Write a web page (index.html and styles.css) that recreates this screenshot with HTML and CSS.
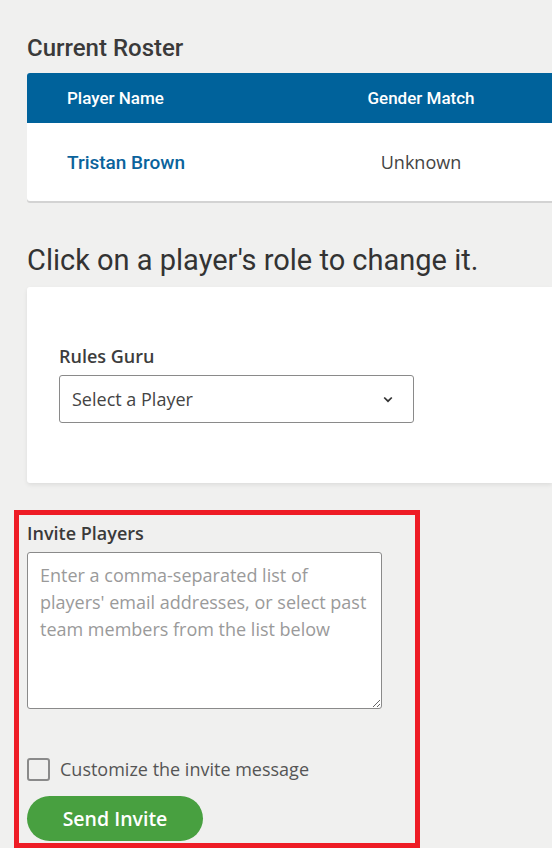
FILE: index.html
```html
<!DOCTYPE html>
<html>
<head>
<meta charset="utf-8">
<link rel="stylesheet" href="styles.css">
</head>
<body>
<div class="page">
  <h2 class="roster-title">Current Roster</h2>
  <div class="table">
    <div class="thead">
      <div class="col-name">Player Name</div>
      <div class="col-gender">Gender Match</div>
    </div>
    <div class="trow">
      <div class="col-name"><a class="player-link" href="#">Tristan Brown</a></div>
      <div class="col-gender gender-val">Unknown</div>
    </div>
  </div>

  <h2 class="roles-title">Click on a player's role to change it.</h2>
  <div class="card">
    <div class="field-label">Rules Guru</div>
    <div class="select">
      <span>Select a Player</span>
      <svg class="chev" width="10" height="7" viewBox="0 0 10 7"><path d="M1.2 1.5 L5 5.2 L8.8 1.5" fill="none" stroke="#333" stroke-width="1.7"/></svg>
    </div>
  </div>

  <div class="invite">
    <div class="invite-label">Invite Players</div>
    <textarea class="invite-text" placeholder="Enter a comma-separated list of players' email addresses, or select past team members from the list below"></textarea>
    <label class="check-row">
      <span class="checkbox"></span>
      <span class="check-label">Customize the invite message</span>
    </label>
    <button class="send-btn">Send Invite</button>
  </div>
</div>
</body>
</html>
```

FILE: styles.css
```css
html, body {
  margin: 0;
  padding: 0;
  background: #f0f0ef;
  overflow: hidden;
}
body {
  width: 552px;
  height: 848px;
  font-family: "Open Sans", "Liberation Sans", sans-serif;
  color: #333;
}
.page {
  padding: 34px 0 0 27px;
}
.roster-title {
  font-family: Roboto, "Liberation Sans", sans-serif;
  font-weight: 500;
  font-size: 24px;
  color: #3a3a3a;
  margin: 0;
  line-height: 28px;
}
.table {
  margin-top: 11px;
  width: 525px;
  background: #fff;
  border-radius: 3px 0 0 3px;
  box-shadow: 0 2px 0 #d3d3d3;
  overflow: hidden;
}
.thead {
  display: flex;
  height: 50px;
  align-items: center;
  background: #00629b;
  color: #fff;
  font-family: Roboto, "Liberation Sans", sans-serif;
  font-weight: 500;
  font-size: 17px;
}
.trow {
  display: flex;
  height: 78px;
  align-items: center;
}
.col-name {
  width: 245px;
  padding-left: 40px;
}
.col-gender {
  width: 218px;
  text-align: center;
}
.player-link {
  font-family: Roboto, "Liberation Sans", sans-serif;
  font-weight: 500;
  font-size: 19px;
  color: #0a639c;
  text-decoration: none;
}
.gender-val {
  font-size: 18px;
  color: #444;
}
.roles-title {
  font-family: Roboto, "Liberation Sans", sans-serif;
  font-weight: 400;
  font-size: 29px;
  color: #333;
  margin: 41px 0 0 0;
  line-height: 36px;
}
.card {
  margin-top: 9px;
  width: 525px;
  height: 196px;
  box-sizing: border-box;
  background: #fff;
  border-radius: 3px 0 0 3px;
  box-shadow: 0 2px 4px rgba(0,0,0,0.08);
  padding: 57px 0 0 32px;
}
.field-label {
  font-size: 18px;
  font-weight: 600;
  color: #3d3d3d;
  line-height: 24px;
}
.select {
  margin-top: 7px;
  width: 355px;
  height: 48px;
  box-sizing: border-box;
  border: 1px solid #8a8a8a;
  border-radius: 3px;
  display: flex;
  align-items: center;
  justify-content: space-between;
  padding: 0 20px 0 12px;
  font-size: 18px;
  color: #444;
}
.chev { display: block; }
.invite {
  margin: 27px 0 0 -13px;
  width: 406px;
  height: 338px;
  box-sizing: border-box;
  border: 5px solid #ee1c25;
  padding: 6px 0 0 8px;
}
.invite-label {
  font-size: 18px;
  font-weight: 600;
  color: #3a3a3a;
  line-height: 24px;
}
.invite-text {
  display: block;
  margin-top: 7px;
  width: 355px;
  height: 157px;
  box-sizing: border-box;
  border: 1px solid #8a8a8a;
  border-radius: 3px;
  background: #fff;
  padding: 9px 12px;
  font-family: "Open Sans", "Liberation Sans", sans-serif;
  font-size: 18px;
  line-height: 27px;
  resize: vertical;
  color: #333;
}
.invite-text::placeholder {
  color: #9a9a9a;
}
.check-row {
  display: flex;
  align-items: center;
  margin-top: 48px;
  gap: 10px;
}
.checkbox {
  width: 23px;
  height: 23px;
  box-sizing: border-box;
  border: 2px solid #8a8a8a;
  border-radius: 3px;
}
.check-label {
  font-size: 18px;
  color: #555;
  line-height: 24px;
}
.send-btn {
  display: block;
  margin-top: 15px;
  width: 176px;
  height: 45px;
  border: none;
  border-radius: 23px;
  background: #48a040;
  color: #fff;
  font-family: "Open Sans", "Liberation Sans", sans-serif;
  font-size: 19.5px;
  font-weight: 600;
  padding: 0;
  cursor: pointer;
}
```
